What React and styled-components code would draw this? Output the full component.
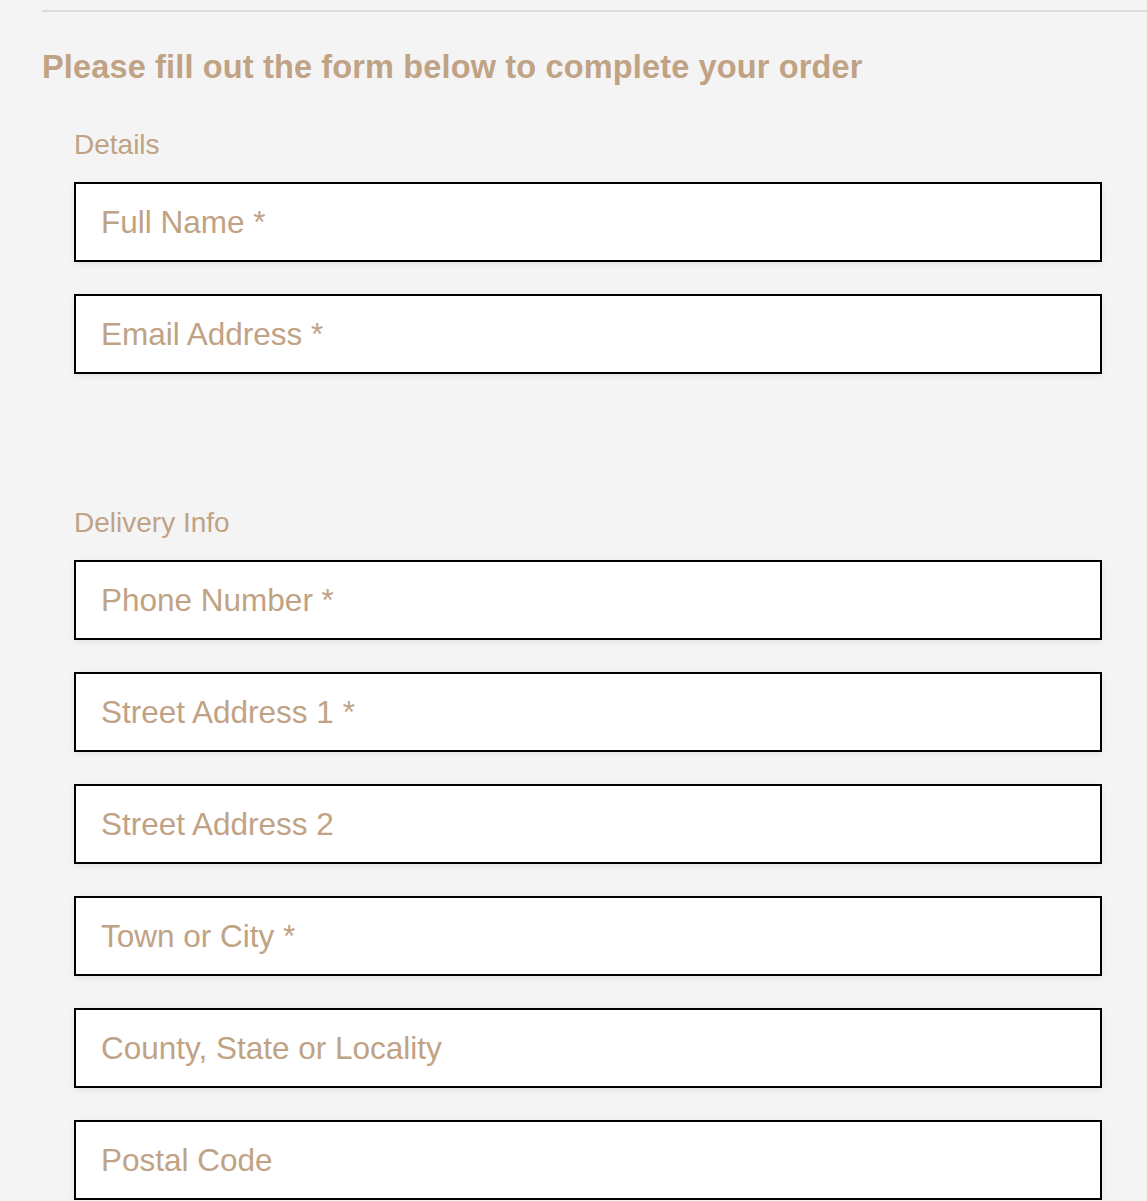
import React from 'react';
import styled, { createGlobalStyle } from 'styled-components';

const GlobalStyle = createGlobalStyle`
  body {
    margin: 0;
    background: #f4f4f4;
    font-family: "Liberation Sans", Arial, sans-serif;
  }
`;

const Page = styled.div`
  padding: 10px 0 0 42px;
`;

const Rule = styled.hr`
  margin: 0;
  border: 0;
  border-top: 2px solid #dcdcdc;
`;

const Heading = styled.h2`
  margin: 36px 0 0;
  font-size: 32.5px;
  font-weight: 700;
  color: #c0a285;
  letter-spacing: 0.15px;
  line-height: 38px;
`;

const Section = styled.fieldset`
  border: 0;
  padding: 0;
  margin: ${(p) => p.$top}px 45px 0 32px;
`;

const Legend = styled.legend`
  padding: 0;
  font-size: 28px;
  line-height: 30px;
  color: #c0a285;
  margin-bottom: 22px;
`;

const Fields = styled.div`
  display: flex;
  flex-direction: column;
  gap: 32px;
`;

const Field = styled.input`
  box-sizing: border-box;
  width: 100%;
  height: 80px;
  border: 2px solid #000;
  background: #fff;
  padding: 0 25px;
  font-family: "Liberation Sans", Arial, sans-serif;
  font-size: 31.5px;
  color: #333;
  box-shadow: 0 2px 6px rgba(0, 0, 0, 0.07);
  outline: none;

  &::placeholder {
    color: #c0a285;
    opacity: 1;
  }
`;

const details = ['Full Name *', 'Email Address *'];
const delivery = [
  'Phone Number *',
  'Street Address 1 *',
  'Street Address 2',
  'Town or City *',
  'County, State or Locality',
  'Postal Code',
];

export default function App() {
  return (
    <Page>
      <GlobalStyle />
      <Rule />
      <Heading>Please fill out the form below to complete your order</Heading>
      <Section $top={44}>
        <Legend>Details</Legend>
        <Fields>
          {details.map((p) => (
            <Field key={p} placeholder={p} />
          ))}
        </Fields>
      </Section>
      <Section $top={134}>
        <Legend>Delivery Info</Legend>
        <Fields>
          {delivery.map((p) => (
            <Field key={p} placeholder={p} />
          ))}
        </Fields>
      </Section>
    </Page>
  );
}
